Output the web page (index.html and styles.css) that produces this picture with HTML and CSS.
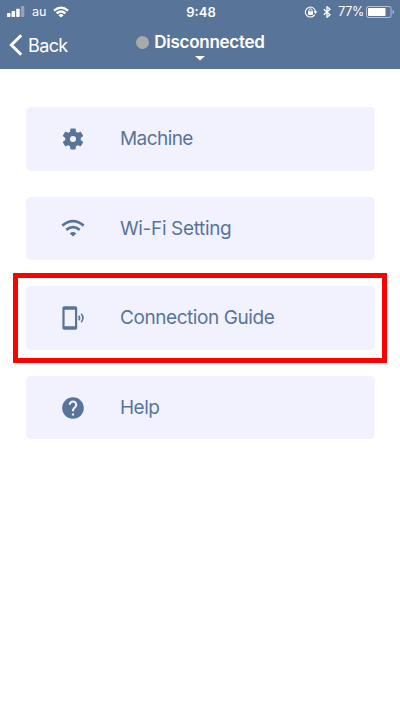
FILE: index.html
```html
<!DOCTYPE html>
<html lang="en">
<head>
<meta charset="utf-8">
<title>Connection</title>
<link rel="stylesheet" href="styles.css">
</head>
<body>
<header class="header">
  <div class="status">
    <div class="status-left">
      <svg class="signal" viewBox="0 0 18 11" width="18" height="11" fill="#fff"><rect x="0" y="7" width="3.5" height="4" rx=".7"/><rect x="4.6" y="5" width="3.5" height="6" rx=".7"/><rect x="9.2" y="2.7" width="3.5" height="8.3" rx=".7"/><rect x="13.8" y="0" width="3.5" height="11" rx=".7" opacity=".35"/></svg>
      <span class="carrier">au</span>
      <svg viewBox="0 0 16 12" width="16" height="12" fill="none" stroke="#fff" stroke-width="2.3"><path d="M1 4.6Q8-1.4 15 4.6M3.6 7.4Q8 3.5 12.4 7.4"/><path d="M8 11.6 5.4 9.2Q8 7 10.6 9.2Z" fill="#fff" stroke="none"/></svg>
    </div>
    <span class="time">9:48</span>
    <div class="status-right">
      <svg viewBox="0 0 14 12" width="14" height="12" fill="none" stroke="#fff"><path d="M10.7 8.6A5 5 0 1 1 11.4 5.8" stroke-width="1.1"/><path d="M9.4 5.3h4L11.4 8Z" fill="#fff" stroke="none"/><rect x="4" y="5.3" width="5" height="3.6" fill="#fff" stroke="none"/><path d="M5 5.5V4.3a1.5 1.5 0 0 1 3 0v1.2"/></svg>
      <svg class="bluetooth" viewBox="0 0 8 12" width="8" height="12" fill="none" stroke="#fff" stroke-width="1.3"><path d="M.8 3.2 7 8.7 4 11.2V.8L7 3.3.8 8.8"/></svg>
      <span class="percent">77%</span>
      <svg viewBox="0 0 29 12" width="29" height="12"><rect x=".5" y=".5" width="24.5" height="11" rx="2" fill="none" stroke="#fff" stroke-opacity=".55"/><rect x="2" y="2" width="17.5" height="8" rx=".7" fill="#fff"/><path d="M26.6 4q1.4.5 1.4 2t-1.4 2z" fill="#fff" opacity=".6"/></svg>
    </div>
  </div>
  <div class="nav">
    <div class="back">
      <svg viewBox="0 0 14 22" width="14" height="22" fill="none" stroke="#fff" stroke-width="3"><path d="M12.2 1.2 2.4 11l9.8 9.8"/></svg>
      <span class="back-label">Back</span>
    </div>
    <div class="connection">
      <div class="state"><span class="dot"></span><span class="state-label">Disconnected</span></div>
      <svg class="caret" viewBox="0 0 10 5" width="10" height="5"><path d="M0 0h10L5 4.6z" fill="#fff"/></svg>
    </div>
  </div>
</header>
<main class="menu">
  <div class="item">
    <svg class="icon" viewBox="0 0 24 24"><path fill="currentColor" d="M19.14 12.94c.04-.3.06-.61.06-.94 0-.32-.02-.64-.07-.94l2.03-1.58c.18-.14.23-.41.12-.61l-1.92-3.32c-.12-.22-.37-.29-.59-.22l-2.39.96c-.5-.38-1.03-.7-1.62-.94l-.36-2.54c-.04-.24-.24-.41-.48-.41h-3.84c-.24 0-.43.17-.47.41l-.36 2.54c-.59.24-1.13.57-1.62.94l-2.39-.96c-.22-.08-.47 0-.59.22L2.74 8.87c-.12.21-.08.47.12.61l2.03 1.58c-.05.3-.09.63-.09.94s.02.64.07.94l-2.03 1.58c-.18.14-.23.41-.12.61l1.92 3.32c.12.22.37.29.59.22l2.39-.96c.5.38 1.03.7 1.62.94l.36 2.54c.05.24.24.41.48.41h3.84c.24 0 .44-.17.47-.41l.36-2.54c.59-.24 1.13-.56 1.62-.94l2.39.96c.22.08.47 0 .59-.22l1.92-3.32c.12-.22.07-.47-.12-.61zM12 14.8a2.8 2.8 0 1 1 0-5.6 2.8 2.8 0 0 1 0 5.6z"/></svg>
    <span class="label machine">Machine</span>
  </div>
  <div class="item">
    <svg class="icon" viewBox="0 0 26 26" fill="none" stroke="currentColor" stroke-width="2.7"><path d="M2.3 10.6Q13 1.8 23.7 10.6M6.3 14.9Q13 9.5 19.7 14.9"/><path d="M13 21.6 9.7 18.4Q13 15.8 16.3 18.4Z" fill="currentColor" stroke="none"/></svg>
    <span class="label wifi">Wi-Fi Setting</span>
  </div>
  <div class="item highlighted">
    <svg class="icon" viewBox="0 0 26 26" fill="none" stroke="currentColor"><path fill="currentColor" fill-rule="evenodd" stroke="none" d="M4.2 1.3h11.2q1.8 0 1.8 1.8v19.8q0 1.8-1.8 1.8H4.2q-1.8 0-1.8-1.8V3.1q0-1.8 1.8-1.8zM4.6 4.7v16.6H15V4.7z"/><path d="M18.8 10.8q1.6 2.2 0 4.4M21.2 8.8q3.5 4.2 0 8.4" stroke-width="1.6"/></svg>
    <span class="label guide">Connection Guide</span>
  </div>
  <div class="item">
    <svg class="icon" viewBox="0 0 24 24"><path fill="currentColor" d="M12 2C6.48 2 2 6.48 2 12s4.48 10 10 10 10-4.48 10-10S17.52 2 12 2zm1 17h-2v-2h2v2zm2.07-7.75-.9.92C13.45 12.9 13 13.5 13 15h-2v-.5c0-1.1.45-2.1 1.17-2.83l1.24-1.26c.37-.36.59-.86.59-1.41 0-1.1-.9-2-2-2s-2 .9-2 2H8c0-2.21 1.79-4 4-4s4 1.79 4 4c0 .88-.36 1.68-.93 2.25z"/></svg>
    <span class="label help">Help</span>
  </div>
</main>
</body>
</html>
```
FILE: styles.css
```css
* { box-sizing: border-box; }
body {
  margin: 0;
  min-height: 711px;
  background: #fff;
  font-family: Inter, "Liberation Sans", sans-serif;
}
svg { display: block; flex: none; }
.header { height: 68.5px; background: #597499; color: #fff; }
.status {
  display: grid;
  grid-template-columns: 1fr auto 1fr;
  align-items: center;
  height: 23px;
  padding: 0 5px 0 7px;
  font-size: 12.5px;
  line-height: 16px;
}
.status-left, .status-right { display: flex; align-items: center; }
.status-right { justify-content: flex-end; }
.carrier { margin: 0 7px 0 7px; }
.time { font-weight: 600; font-size: 13px; line-height: 14px; }
.bluetooth { margin: 0 7px 0 5px; }
.percent { margin-right: 2px; font-size: 12.5px; letter-spacing: -.3px; }
.nav {
  display: grid;
  grid-template-columns: 1fr auto 1fr;
  height: 45px;
  padding: 0 8px 0 9px;
}
.back { display: flex; align-items: center; height: 44px; gap: 5px; }
.back-label { font-size: 18px; letter-spacing: -.6px; }
.connection { display: flex; flex-direction: column; align-items: center; padding-top: 8px; }
.state { display: flex; align-items: center; gap: 5px; height: 22px; }
.dot { width: 13px; height: 13px; border-radius: 50%; background: #aaa; }
.state-label { font-size: 17px; font-weight: 600; letter-spacing: -.26px; }
.caret { margin-top: 3px; }
.menu { display: grid; grid-auto-rows: 63.5px; gap: 26.1px; padding: 38.5px 25px 0 26px; }
.item {
  display: flex;
  align-items: center;
  padding-left: 34px;
  border-radius: 5px;
  background: #f2f2ff;
  color: #597499;
}
.highlighted { position: relative; }
.highlighted::after {
  content: "";
  position: absolute;
  inset: -13px -12px -13px -13px;
  border: 5.5px solid #f00;
}
.icon { width: 26px; height: 26px; margin-right: 34px; }
.label { padding-top: 1px; font-size: 19px; line-height: 24px; white-space: nowrap; }
.machine { letter-spacing: -.57px; }
.wifi { letter-spacing: -.35px; }
.guide { letter-spacing: -.43px; }
.help { letter-spacing: -.5px; }
```
